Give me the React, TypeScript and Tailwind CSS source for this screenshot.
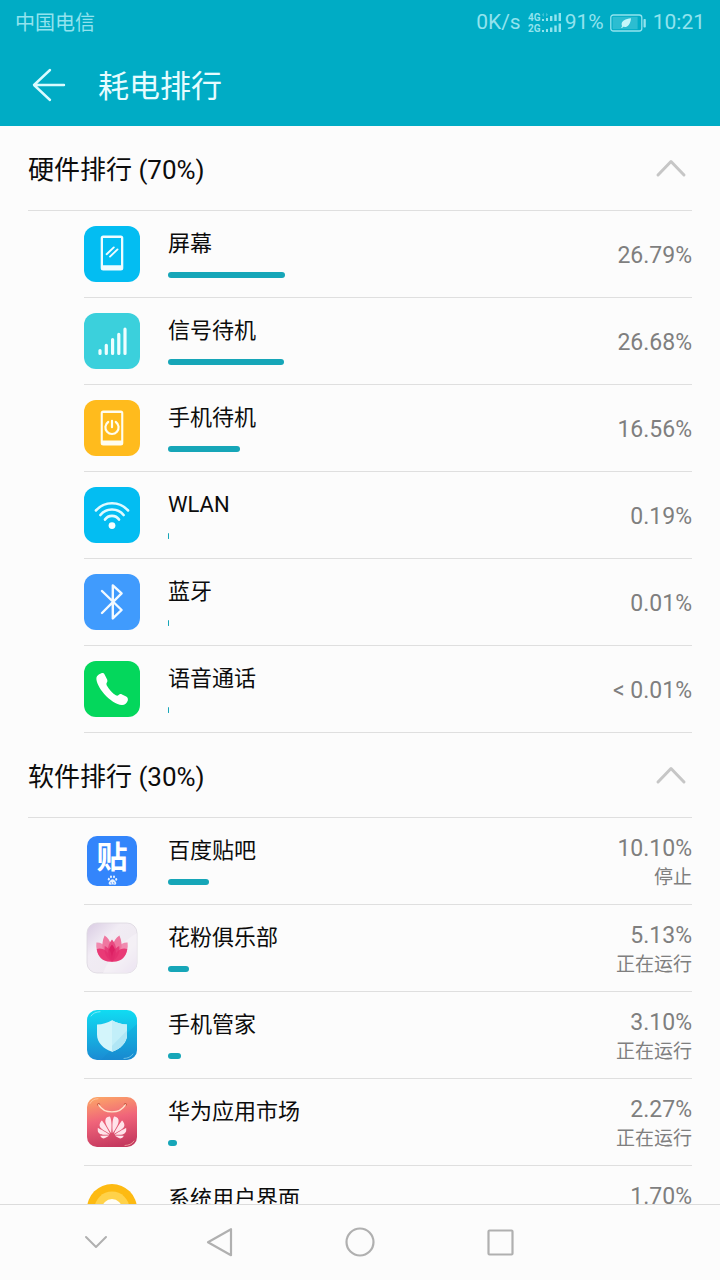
import { useState } from "react";
import type { ReactNode } from "react";
import { SiHuawei } from "react-icons/si";

interface UsageItem {
  name: string;
  value: string;
  bar: number;
  status?: string;
  icon: ReactNode;
}

interface UsageSectionProps {
  title: string;
  items: UsageItem[];
}

function Tile({ color, children }: { color: string; children: ReactNode }) {
  return (
    <svg viewBox="0 0 56 56" className="size-14 shrink-0" aria-hidden="true">
      <rect width="56" height="56" rx="12" fill={color} />
      {children}
    </svg>
  );
}

function AppTile({ children }: { children: ReactNode }) {
  return (
    <svg viewBox="0 0 56 56" className="size-14 shrink-0" aria-hidden="true">
      {children}
    </svg>
  );
}

function ScreenIcon() {
  return (
    <Tile color="#03bdf2">
      <path
        fill="#effcff"
        fillRule="evenodd"
        d="M19.2 9.4h17.6a2.5 2.5 0 0 1 2.5 2.5v30a2.5 2.5 0 0 1-2.5 2.5H19.2a2.5 2.5 0 0 1-2.5-2.5v-30a2.5 2.5 0 0 1 2.5-2.5zM19 12v27.2h18V12z"
      />
      <path d="M22.6 28.2l7.2-6.8M26 30.6l7.5-7.2" stroke="#effcff" strokeWidth="1.9" strokeLinecap="round" />
    </Tile>
  );
}

function SignalIcon() {
  return (
    <Tile color="#3bd0dc">
      <path
        d="M16 40.5V37.6M22.3 40.5V32.3M28.6 40.5V26.6M34.8 40.5V21.3M41 40.5V16.2"
        stroke="#effeff"
        strokeWidth="3.2"
        strokeLinecap="round"
      />
    </Tile>
  );
}

function StandbyIcon() {
  return (
    <Tile color="#ffbb1d">
      <path
        fill="#fffdf0"
        fillRule="evenodd"
        d="M19.2 10.6h17.6a2.5 2.5 0 0 1 2.5 2.5v30a2.5 2.5 0 0 1-2.5 2.5H19.2a2.5 2.5 0 0 1-2.5-2.5v-30a2.5 2.5 0 0 1 2.5-2.5zM18.8 13v27.6h18.4V13z"
      />
      <path
        d="M24.2 22a6.6 6.6 0 1 0 7.6 0M28 20.8v6.4"
        fill="none"
        stroke="#fffdf0"
        strokeWidth="2.2"
        strokeLinecap="round"
      />
    </Tile>
  );
}

function WlanIcon() {
  return (
    <Tile color="#03bdf2">
      <g fill="none" stroke="#dffaff" strokeWidth="2.7" strokeLinecap="round">
        <path d="M12 23.4a21.5 21.5 0 0 1 32 0" />
        <path d="M16.4 28a15 15 0 0 1 23.2 0" />
        <path d="M21 32.6a8.4 8.4 0 0 1 14 0" />
      </g>
      <circle cx="28" cy="38.6" r="3.4" fill="#f6feff" />
    </Tile>
  );
}

function BluetoothIcon() {
  return (
    <Tile color="#409bfd">
      <path
        d="M18 17l19.6 19-8.8 8.4V11.4l8.8 8L18 39"
        fill="none"
        stroke="#f3faff"
        strokeWidth="2.4"
        strokeLinecap="round"
        strokeLinejoin="round"
      />
    </Tile>
  );
}

function CallIcon() {
  return (
    <Tile color="#04d75c">
      <path
        fill="#ffffff"
        d="M17.4 12.2C15 12.8 12.8 14.6 12.4 16.8C12 21 15.4 27.4 20.2 33C25.6 39.2 32.6 43.6 37.8 44C40.6 44.2 43 42 43.8 39.4C44.2 37.8 43.6 36.4 42.2 35.6L38 33.4C36.6 32.7 35.6 33 34.6 34C33.8 34.9 32.8 34.9 31.8 34.2C28.4 32 24.8 28.2 22.8 24.4C22.2 23.2 22.4 22.4 22.9 21.6C23.6 20.4 23.5 19.4 23 18.2L20.6 13.6C19.9 12.3 18.9 11.9 17.4 12.2Z"
      />
    </Tile>
  );
}

function TiebaIcon() {
  return (
    <AppTile>
      <rect x="3" y="3" width="50" height="50" rx="10" fill="#3385fb" />
      <text
        x="28"
        y="35"
        textAnchor="middle"
        fontSize="31"
        fontWeight="700"
        fill="#ffffff"
        className="font-['Noto_Sans_CJK_SC',sans-serif]"
      >
        贴
      </text>
      <g fill="#e8f2ff">
        <ellipse cx="24.8" cy="46.2" rx="1" ry="1.4" />
        <ellipse cx="27" cy="43.8" rx="1" ry="1.4" />
        <ellipse cx="30" cy="43.8" rx="1" ry="1.4" />
        <ellipse cx="32.2" cy="46.4" rx="1" ry="1.4" />
        <path d="M28.5 46.2c1.6 0 2 1.3 3 2.2 1.2 1.2 1 3.4-.8 3.4-.9 0-1.3-.2-2.2-.2s-1.3.2-2.2.2c-1.8 0-2.2-2.2-.8-3.4 1-.9 1.4-2.2 3-2.2z" />
      </g>
      <path d="M27 49v1.2h1M29.6 49v1.2h1" stroke="#3385fb" strokeWidth=".6" fill="none" />
    </AppTile>
  );
}

function LotusIcon() {
  return (
    <AppTile>
      <defs>
        <linearGradient id="lotus-bg" x1="0" y1="0" x2="1" y2="1">
          <stop offset="0" stopColor="#d9cbe3" />
          <stop offset=".35" stopColor="#f1ecf4" />
          <stop offset=".7" stopColor="#efeaf1" />
          <stop offset="1" stopColor="#dccbe6" />
        </linearGradient>
      </defs>
      <rect x="3" y="3" width="50" height="50" rx="10" fill="url(#lotus-bg)" stroke="#dcd7e0" strokeWidth=".8" />
      <path d="M53 13c-14 8-27 22-34 40h24a10 10 0 0 0 10-10z" fill="#f7f4f8" opacity=".6" />
      <path d="M12.4 22.5c7-.5 13 6 15.6 18.5-10 0-17-7-15.6-18.5zM43.6 22.5c-7-.5-13 6-15.6 18.5 10 0 17-7 15.6-18.5z" fill="#f08bb0" />
      <path d="M20.6 15.6c6.5 4.5 8.9 13 7.4 25.4-9.5-5-12-15-7.4-25.4zM35.4 15.6c-6.5 4.5-8.9 13-7.4 25.4 9.5-5 12-15 7.4-25.4z" fill="#ef77a0" />
      <path d="M28 19.5c5.5 6 5.5 15 0 22.500-5.5-7.500-5.500-16.500 0-22.500z" fill="#e84a80" />
      <path d="M12.800 29c6-2 12.200 2 15.200 12.700C19.500 42.500 13.500 37 12.800 29zM43.200 29c-6-2-12.200 2-15.200 12.700 8.500.8 14.500-4.700 15.200-12.700z" fill="#e93a76" />
      <path d="M28 24.500c4.500 5 5 11 0 17.200-5-6.200-4.500-12.200 0-17.200z" fill="#dd2164" />
      <path d="M20.800 26c5 2 7.500 7.500 7.200 15.500-5.500-3-8.500-9-7.200-15.500zM35.200 26c-5 2-7.500 7.500-7.200 15.500 5.500-3 8.500-9 7.200-15.500z" fill="#e3306f" opacity=".8" />
    </AppTile>
  );
}

function ManagerIcon() {
  return (
    <AppTile>
      <defs>
        <linearGradient id="manager-bg" x1="0" y1="0" x2="0" y2="1">
          <stop offset="0" stopColor="#10dcf2" />
          <stop offset="1" stopColor="#1b8bd3" />
        </linearGradient>
      </defs>
      <rect x="3" y="3" width="50" height="50" rx="10" fill="url(#manager-bg)" />
      <path d="M7 9c2-3 5-4 9-4.300M49 47c-2 3-5 4.200-9 4.500" stroke="#b5f3fb" strokeWidth=".8" fill="none" strokeLinecap="round" opacity=".8" />
      <path d="M43 26L25 44.500l-8 8.500h26a10 10 0 0 0 10-10V17z" fill="#0f7fc4" opacity=".18" />
      <path d="M28 13.200c4.500 2.600 9.500 4 15 4.400v10c0 8-6.500 14.400-15 17.200-8.500-2.800-15-9.200-15-17.200v-10c5.500-.4 10.500-1.800 15-4.400z" fill="#d3f5fb" />
      <path d="M28 13.200c4.500 2.600 9.500 4 15 4.400v10c0 8-6.500 14.400-15 17.200z" fill="#c2eff9" />
      <path d="M43 23.500v4.100c0 8-6.500 14.400-15 17.200v-6z" fill="#b0e6f5" />
    </AppTile>
  );
}

function MarketIcon() {
  return (
    <AppTile>
      <defs>
        <linearGradient id="market-bg" x1=".3" y1="0" x2=".5" y2="1">
          <stop offset="0" stopColor="#fba268" />
          <stop offset=".45" stopColor="#f0647a" />
          <stop offset="1" stopColor="#c5395f" />
        </linearGradient>
      </defs>
      <rect x="3" y="3" width="50" height="50" rx="10" fill="url(#market-bg)" />
      <path d="M6 9.500c1.500-3 4-4.500 8-4.800M50 47c-2 3-5 4.200-9 4.500" stroke="#ffd3b8" strokeWidth=".8" fill="none" strokeLinecap="round" opacity=".8" />
      <circle cx="14.700" cy="10.500" r="1.500" fill="#c9583f" />
      <circle cx="41.300" cy="10.500" r="1.500" fill="#c9583f" />
      <path d="M14.700 10.800c5.500 9.400 21 9.400 26.600 0" stroke="#ffe1cc" strokeWidth="1.400" fill="none" strokeLinecap="round" />
      <SiHuawei x="13.500" y="19" size={29} color="#ffe3ea" />
    </AppTile>
  );
}

function SystemUiIcon() {
  return (
    <AppTile>
      <circle cx="28" cy="28" r="25" fill="#fdba12" />
      <path d="M44 22l9 6a25 25 0 0 1-4 13z" fill="#eca50c" />
      <circle cx="28" cy="28" r="17.500" fill="#ffd24a" />
      <circle cx="28" cy="28" r="10" fill="#fffdf6" />
    </AppTile>
  );
}

const HARDWARE: UsageItem[] = [
  { name: "屏幕", value: "26.79%", bar: 26.79, icon: <ScreenIcon /> },
  { name: "信号待机", value: "26.68%", bar: 26.68, icon: <SignalIcon /> },
  { name: "手机待机", value: "16.56%", bar: 16.56, icon: <StandbyIcon /> },
  { name: "WLAN", value: "0.19%", bar: 0.19, icon: <WlanIcon /> },
  { name: "蓝牙", value: "0.01%", bar: 0.01, icon: <BluetoothIcon /> },
  { name: "语音通话", value: "< 0.01%", bar: 0.01, icon: <CallIcon /> },
];

const SOFTWARE: UsageItem[] = [
  { name: "百度贴吧", value: "10.10%", bar: 9.4, status: "停止", icon: <TiebaIcon /> },
  { name: "花粉俱乐部", value: "5.13%", bar: 4.8, status: "正在运行", icon: <LotusIcon /> },
  { name: "手机管家", value: "3.10%", bar: 3, status: "正在运行", icon: <ManagerIcon /> },
  { name: "华为应用市场", value: "2.27%", bar: 2.1, status: "正在运行", icon: <MarketIcon /> },
  { name: "系统用户界面", value: "1.70%", bar: 1.6, icon: <SystemUiIcon />, status: "正在运行" },
];

function StatusBar() {
  return (
    <div className="flex h-11 items-center justify-between px-[15px] pt-0.5 text-[21px] text-[#92e3ee]">
      <span className="text-[20px]">中国电信</span>

      <div className="flex items-center">
        <span>0K/s</span>

        <svg viewBox="0 0 34 22" className="ml-[7px] h-[22px] w-[34px]" fill="currentColor" role="img" aria-label="信号">
          <text x="0" y="9" fontSize="10" fontWeight="700">4G</text>
          <text x="0" y="20" fontSize="10" fontWeight="700">2G</text>
          <path d="M14 7h2v2h-2zM18 6h2v3h-2zM22 4h2.400v5H22zM26.300 2.500h2.400V9h-2.400zM30.600 1H33v8h-2.400z" />
          <path d="M14 18h2v2h-2zM18 17h2v3h-2zM22 15.500h2.400V20H22zM26.300 13.500h2.400V20h-2.400zM30.600 11.500H33V20h-2.400z" />
          <path d="M16 .8l-2.200 2L16 4.800zM18 .8l2.200 2-2.200 2z" opacity=".4" />
        </svg>

        <span className="ml-[3px]">91%</span>

        <svg viewBox="0 0 36 18" className="ml-[6px] h-[18px] w-9" role="img" aria-label="电池">
          <rect x=".8" y="1" width="31" height="16" rx="2.500" fill="none" stroke="currentColor" strokeWidth="1.300" />
          <rect x="2.600" y="2.800" width="25" height="12.400" fill="currentColor" opacity=".3" />
          <rect x="33.500" y="5" width="2.300" height="8.500" rx=".8" fill="currentColor" />
          <path d="M21 4.200c-5.600.5-9.400 2.600-9.400 6 0 .8.200 1.500.6 2l-1.200 1.400 1 .4 1.400-1.200c3.800.9 7.100-1.900 7.600-8.600z" fill="#c6f6fa" />
        </svg>

        <span className="ml-[7px]">10:21</span>
      </div>
    </div>
  );
}

function UsageRow({ item }: { item: UsageItem }) {
  return (
    <li className="flex h-[87px] items-center border-b border-[#dfdfdf]">
      {item.icon}

      <div className="ml-7 min-w-0 flex-1">
        <p className="truncate text-[22px] leading-7 text-[#0c0c0c]">{item.name}</p>
        <div className="mt-3.5 h-1.5">
          <div
            className="h-full min-w-px rounded-full bg-[#16a6b8]"
            style={{ width: `${item.bar}%` }}
          />
        </div>
      </div>

      <div className="w-[88px] shrink-0 pt-1 text-right text-[#7f7f7f]">
        <p className="text-[23px] leading-[30px] whitespace-nowrap">{item.value}</p>
        {item.status && <p className="text-[19px] leading-7">{item.status}</p>}
      </div>
    </li>
  );
}

function UsageSection({ title, items }: UsageSectionProps) {
  const [open, setOpen] = useState(true);

  return (
    <section className="px-7">
      <h2 className="border-b border-[#dfdfdf]">
        <button
          type="button"
          aria-expanded={open}
          onClick={() => setOpen(!open)}
          className="flex h-[84px] w-full items-center justify-between text-[26px] text-[#0c0c0c]"
        >
          <span className="pt-1">{title}</span>
          <svg
            viewBox="0 0 32 20"
            className={open ? "mr-[5px] h-5 w-8" : "mr-[5px] h-5 w-8 rotate-180"}
            fill="none"
            stroke="#c6c6c6"
            strokeWidth="3"
            strokeLinecap="round"
            strokeLinejoin="round"
            aria-hidden="true"
          >
            <path d="M3 17L16 3.500L29 17" />
          </svg>
        </button>
      </h2>

      {open && (
        <ul className="pl-14">
          {items.map((item) => (
            <UsageRow key={item.name} item={item} />
          ))}
        </ul>
      )}
    </section>
  );
}

function NavigationBar() {
  return (
    <nav
      aria-label="系统导航"
      className="grid h-[76px] shrink-0 grid-cols-[1fr_140px_140px_140px_1fr] border-t border-[#dcdcdc] pb-0.5 text-[#b0b0b0]"
    >
      <button type="button" aria-label="隐藏导航栏" className="flex w-[108px] items-center justify-center justify-self-end">
        <svg viewBox="0 0 24 14" className="h-3.5 w-6" fill="none" stroke="currentColor" strokeWidth="2" strokeLinecap="round" strokeLinejoin="round">
          <path d="M2 2l10 10L22 2" />
        </svg>
      </button>
      <button type="button" aria-label="返回" className="flex items-center justify-center">
        <svg viewBox="0 0 30 30" className="size-[30px]" fill="none" stroke="currentColor" strokeWidth="2.200" strokeLinejoin="round">
          <path d="M26 2.200v26L3 15.200z" />
        </svg>
      </button>
      <button type="button" aria-label="主屏幕" className="flex items-center justify-center">
        <svg viewBox="0 0 30 30" className="size-[30px]" fill="none" stroke="currentColor" strokeWidth="2.200">
          <circle cx="15" cy="15" r="13.500" />
        </svg>
      </button>
      <button type="button" aria-label="最近任务" className="flex items-center justify-center">
        <svg viewBox="0 0 30 30" className="size-[30px]" fill="none" stroke="currentColor" strokeWidth="2.200">
          <rect x="3.500" y="3.500" width="24" height="24" rx="1" />
        </svg>
      </button>
    </nav>
  );
}

export default function App() {
  return (
    <div className="flex h-screen flex-col bg-[#fcfcfc] font-[Roboto,'Noto_Sans_CJK_SC',sans-serif]">
      <header className="shrink-0 bg-[#00acc5]">
        <StatusBar />

        <div className="flex h-[82px] items-center pl-8">
          <button type="button" aria-label="返回" className="text-[#d9fbff]">
            <svg viewBox="0 0 34 34" className="size-[34px]" fill="none" stroke="currentColor" strokeWidth="2.400" strokeLinecap="round" strokeLinejoin="round">
              <path d="M18 2L2 17l16 15M2.500 17H32" />
            </svg>
          </button>
          <h1 className="ml-8 pt-1 text-[31px] text-[#e6fcff]">耗电排行</h1>
        </div>
      </header>

      <main className="min-h-0 flex-1 overflow-y-auto [scrollbar-width:none]">
        <UsageSection title="硬件排行 (70%)" items={HARDWARE} />
        <UsageSection title="软件排行 (30%)" items={SOFTWARE} />
      </main>

      <NavigationBar />
    </div>
  );
}
